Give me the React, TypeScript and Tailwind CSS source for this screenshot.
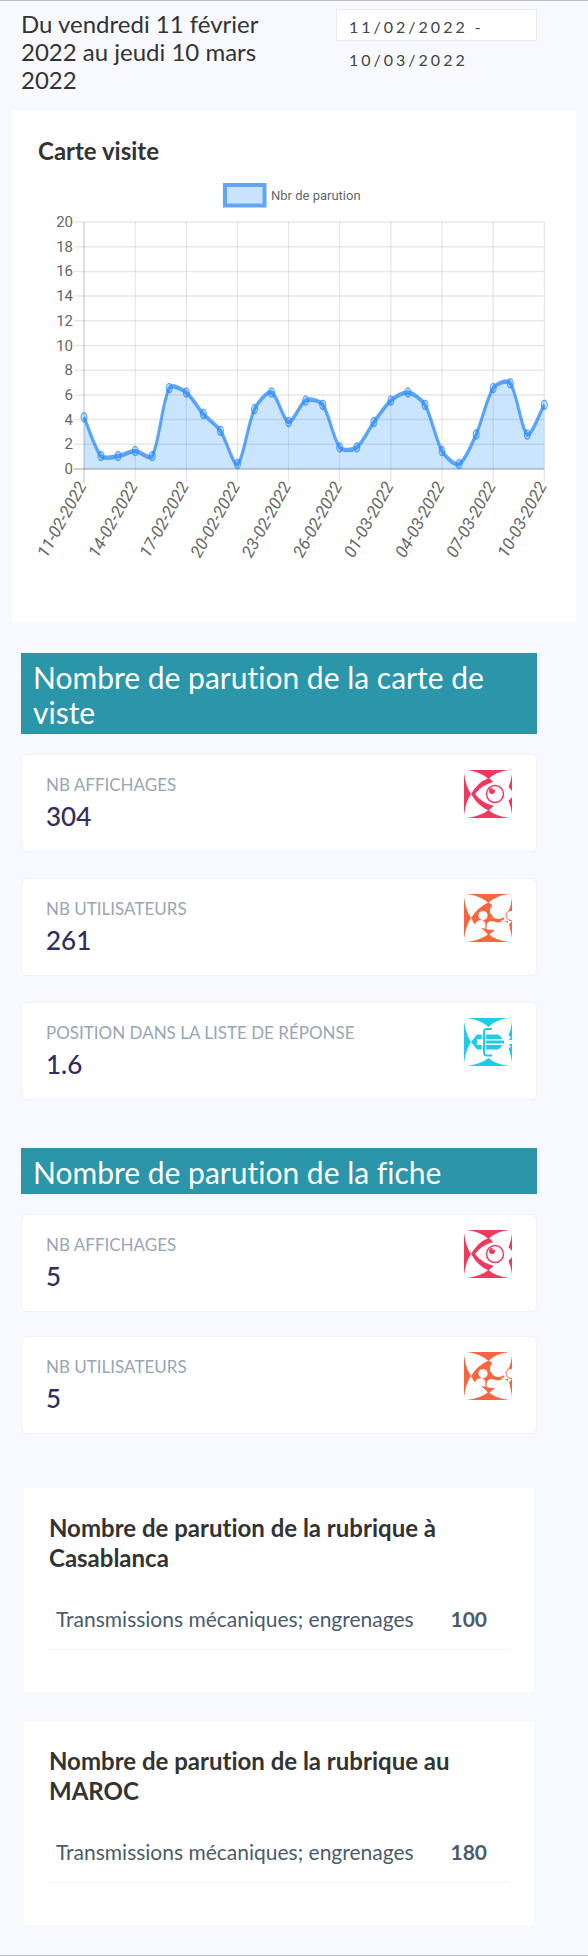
import { useMemo } from "react";

type IconKind = "eye" | "users" | "rank";

const STEP_X = 17.05;
const LEFT = 84;
const BASE = 469;
const UNIT = 12.35;
const STRETCH = 1.5;

const VALUES = [
  4.2, 1.05, 1.05, 1.45, 1.05, 6.55, 6.2, 4.45, 3.1, 0.4, 4.85, 6.2, 3.8, 5.55,
  5.2, 1.75, 1.75, 3.8, 5.55, 6.2, 5.2, 1.45, 0.4, 2.8, 6.55, 6.95, 2.8, 5.2,
];

const DATES = [
  "11-02-2022",
  "14-02-2022",
  "17-02-2022",
  "20-02-2022",
  "23-02-2022",
  "26-02-2022",
  "01-03-2022",
  "04-03-2022",
  "07-03-2022",
  "10-03-2022",
];

const TICKS = [0, 2, 4, 6, 8, 10, 12, 14, 16, 18, 20];

type Point = { x: number; y: number };

function splinePath(points: Point[], tension: number, floor: number): string {
  const controls = points.map((p, i) => {
    const prev = points[Math.max(i - 1, 0)];
    const next = points[Math.min(i + 1, points.length - 1)];
    const before = Math.hypot(p.x - prev.x, p.y - prev.y);
    const after = Math.hypot(next.x - p.x, next.y - p.y);
    const a = (tension * before) / (before + after);
    const b = (tension * after) / (before + after);
    return {
      inX: p.x - a * (next.x - prev.x),
      inY: Math.min(p.y - a * (next.y - prev.y), floor),
      outX: p.x + b * (next.x - prev.x),
      outY: Math.min(p.y + b * (next.y - prev.y), floor),
    };
  });
  return points
    .map((p, i) =>
      i === 0
        ? `M${p.x} ${p.y}`
        : `C${controls[i - 1].outX} ${controls[i - 1].outY} ${controls[i].inX} ${controls[i].inY} ${p.x} ${p.y}`
    )
    .join(" ");
}

function VisitChart() {
  const points = useMemo(
    () => VALUES.map((v, i) => ({ x: LEFT + i * STEP_X, y: (BASE - v * UNIT) / STRETCH })),
    []
  );
  const floor = BASE / STRETCH;
  const line = splinePath(points, 0.28, floor);
  const right = LEFT + 27 * STEP_X;

  return (
    <svg
      viewBox="38 180 512 400"
      className="block w-full overflow-visible font-['Roboto',sans-serif]"
      role="img"
      aria-label="Nbr de parution"
    >
      <rect x="225" y="185" width="39.500" height="20.500" fill="#cce3ff" stroke="#5fa6f9" strokeWidth="4" />
      <text x="271" y="200" fontSize="13" fill="#666">
        Nbr de parution
      </text>

      {TICKS.map((t) => {
        const y = BASE - t * UNIT;
        return (
          <g key={t}>
            <line x1="74" x2={right} y1={y} y2={y} stroke="#000" strokeOpacity={t === 0 ? 0.25 : 0.09} strokeWidth="1.5" />
            <text x="73" y={y + 5} fontSize="15" textAnchor="end" fill="#666">
              {t}
            </text>
          </g>
        );
      })}

      {DATES.map((d, i) => {
        const x = LEFT + i * STEP_X * 3;
        return (
          <g key={d}>
            <line x1={x} x2={x} y1="222" y2="483" stroke="#000" strokeOpacity={i === 0 ? 0.25 : 0.11} strokeWidth="1" />
            <text
              transform={`translate(${x + 3} 486) rotate(-61)`}
              fontSize="17"
              fontStyle="italic"
              textAnchor="end"
              fill="#666"
            >
              {d}
            </text>
          </g>
        );
      })}

      <g transform={`scale(1 ${STRETCH})`}>
        <path d={`${line} L${right} ${floor} L${LEFT} ${floor} Z`} fill="#007bff" fillOpacity="0.2" />
        <path d={line} fill="none" stroke="#2b8af7" strokeOpacity="0.75" strokeWidth="3" />
        {points.map((p) => (
          <circle key={p.x} cx={p.x} cy={p.y} r="3" fill="#007bff" fillOpacity="0.2" stroke="#2b8af7" strokeOpacity="0.75" strokeWidth="1" />
        ))}
      </g>
    </svg>
  );
}

const ICON_COLORS: Record<IconKind, string> = {
  eye: "#f0395f",
  users: "#f7663f",
  rank: "#1ecbea",
};

function StatIcon({ kind }: { kind: IconKind }) {
  const color = ICON_COLORS[kind];
  return (
    <svg viewBox="0 0 48 48" className="size-12 shrink-0" aria-hidden="true">
      <g fill={color}>
        <path d="M3 0H45Q31 2 24.500 9Q17 2 3 0Z" />
        <path d="M3 48H45Q31 46 24.500 40Q17 46 3 48Z" />
        <path d="M0 3Q2 17 7 24Q2 31 0 45Z" />
        <path d="M48 3Q47 12 44.500 17L48 21Z" />
        <path d="M48 45Q47 36 44.500 31L48 27Z" />
      </g>
      {kind === "eye" && (
        <>
          <path d="M7 24Q14 12 24.500 8Q27 9 29 12Q18 15 11 24Q18 33 30 36Q27 38 24.500 40.500Q14 36 7 24Z" fill={color} />
          <circle cx="31" cy="24" r="8.500" fill="none" stroke={color} strokeWidth="1.500" />
          <circle cx="28" cy="21" r="3" fill={color} />
          <circle cx="29.500" cy="19" r="1" fill="#fff" />
        </>
      )}
      {kind === "users" && (
        <>
          <path d="M7 24Q14 13 24.500 8.500Q28 10 30 14L27 24L38 27H44V29L22 31L11 31Z" fill={color} />
          <path d="M17 34Q24 36 31 36Q28 38 24.500 41Q22 37 17 34Z" fill={color} />
          <circle cx="34.500" cy="17" r="8.500" fill="#fff" />
          <path d="M26.500 20.500A8.500 8.500 0 0 0 40 24" fill="none" stroke={color} strokeWidth="2" />
          <circle cx="47" cy="21.500" r="5" fill="#fff" stroke={color} strokeWidth="1" />
          <path d="M9.500 34Q11 26 18 26Q22 27 22 34Z" fill="#fff" />
          <circle cx="19" cy="21.500" r="4.600" fill="#fff" />
          <path d="M22 37V31Q23 27 28 27L34 28.500L40 27Q46 28 46 36L31 37Z" fill="#fff" />
          <path d="M22 36V31Q22.500 28 25 27" fill="none" stroke={color} strokeWidth="1.300" />
          <path d="M17 34Q24 36 31 36Q28 38 24.500 41Q22 37 17 34Z" fill={color} />
        </>
      )}
      {kind === "rank" && (
        <>
          <path d="M7 24L13 16.500H34Q37 18 38.500 21H13V27H38.500Q37 30 34 31.500H13Z" fill={color} />
          <path d="M19 22.500H40V25.500H19Z" fill={color} />
          <path d="M46 20H48V22H45ZM45 26H48V28H46Z" fill={color} />
          <path d="M18.200 36V15Q18.200 10.500 22 10.500" fill="none" stroke="#fff" strokeWidth="1" />
          <path d="M28 11H22.500Q20 11 20 14V34Q20 37.500 22.500 37.500H28" fill="none" stroke={color} strokeWidth="2" />
          <path d="M21.600 15V34" fill="none" stroke="#fff" strokeWidth="1" />
        </>
      )}
    </svg>
  );
}

function StatCard({ label, value, icon }: { label: string; value: string; icon: IconKind }) {
  return (
    <article className="flex items-start justify-between rounded-md border border-[#f1f3f8] bg-white px-6 pt-[15px] pb-[19px]">
      <div className="pt-[3px]">
        <h3 className="text-[17px] leading-6 text-[#98a6b5] uppercase">{label}</h3>
        <p className="pt-[3px] text-[26px] leading-8 font-medium text-[#322d5c]">{value}</p>
      </div>
      <StatIcon kind={icon} />
    </article>
  );
}

function Banner({ children }: { children: string }) {
  return (
    <h2 className="bg-[#2b95aa] px-3 pt-[7px] pb-1 text-[30px] leading-[35px] text-white">{children}</h2>
  );
}

function RubricPanel({ title, value }: { title: string; value: string }) {
  return (
    <section className="bg-white px-[25px] pt-[25px] pb-[42px]">
      <h2 className="text-2xl leading-[30px] font-bold text-[#333]">{title}</h2>
      <table className="mt-[18px] w-full border-b border-[#f1f3f5] text-[#4a5b6c]">
        <tbody>
          <tr>
            <th scope="row" className="pt-4 pb-[18px] pl-[7px] text-left text-[21px] leading-6 font-normal whitespace-nowrap">
              Transmissions mécaniques; engrenages
            </th>
            <td className="pt-4 pr-[22px] pb-[18px] text-right text-[21px] leading-6 font-bold">{value}</td>
          </tr>
        </tbody>
      </table>
    </section>
  );
}

export default function App() {
  return (
    <main className="min-h-screen border-y border-[#bcbcc4] bg-[#f8f9ff] pb-[29px] font-['Lato',sans-serif] [font-variant-ligatures:none]">
      <header className="flex items-start justify-between pt-2 pr-[51px] pl-[21px]">
        <h1 className="w-64 pt-px text-2xl leading-[28px] text-[#333]">
          Du vendredi 11 février 2022 au jeudi 10 mars 2022
        </h1>
        <button
          type="button"
          className="h-8 w-[201px] border border-[#e9ebf0] bg-white px-3 text-left text-base leading-[33px] tracking-[3px] text-[#444]"
        >
          <span className="block h-[34px]">11/02/2022 - 10/03/2022</span>
        </button>
      </header>

      <section className="mx-3 mt-4 bg-white px-[26px] pt-[25px] pb-[42px]">
        <h2 className="text-2xl leading-8 font-bold text-[#333]">Carte visite</h2>
        <div className="mt-[13px]">
          <VisitChart />
        </div>
      </section>

      <div className="mt-[31px] mr-[51px] ml-[21px]">
        <Banner>Nombre de parution de la carte de viste</Banner>
        <div className="mt-5 flex flex-col gap-[26px]">
          <StatCard label="Nb affichages" value="304" icon="eye" />
          <StatCard label="Nb utilisateurs" value="261" icon="users" />
          <StatCard label="Position dans la liste de réponse" value="1.6" icon="rank" />
        </div>

        <div className="mt-12">
          <Banner>Nombre de parution de la fiche</Banner>
        </div>
        <div className="mt-5 flex flex-col gap-6">
          <StatCard label="Nb affichages" value="5" icon="eye" />
          <StatCard label="Nb utilisateurs" value="5" icon="users" />
        </div>

        <div className="mx-[3px] mt-[54px] flex flex-col gap-[29px]">
          <RubricPanel title="Nombre de parution de la rubrique à Casablanca" value="100" />
          <RubricPanel title="Nombre de parution de la rubrique au MAROC" value="180" />
        </div>
      </div>
    </main>
  );
}
